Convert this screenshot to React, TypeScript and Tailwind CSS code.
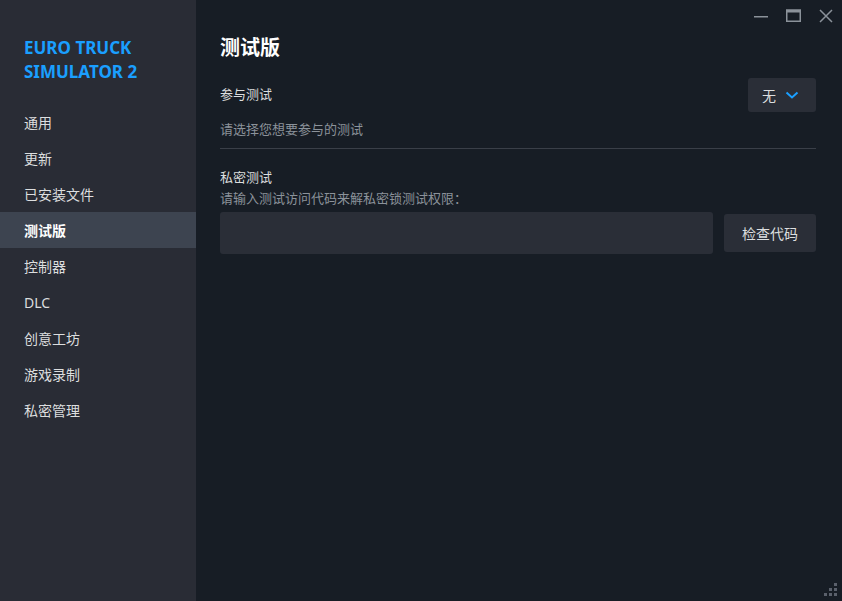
import React from "react";

const font = { fontFamily: '"Noto Sans", "Noto Sans CJK SC", sans-serif' };

const items = ["通用", "更新", "已安装文件", "测试版", "控制器", "DLC", "创意工坊", "游戏录制", "私密管理"];

export default function App() {
  return (
    <div className="flex w-[842px] h-[601px] bg-[#171d25] overflow-hidden" style={font}>
      <div className="w-[196px] shrink-0 bg-[#292c35] flex flex-col">
        <div className="px-6 pt-[36px] pb-[20px] text-[#1a9fff] font-bold text-[17px] leading-[24px]">
          EURO TRUCK
          <br />
          SIMULATOR 2
        </div>
        <div className="flex flex-col">
          {items.map((it) => (
            <div
              key={it}
              className={
                it === "测试版"
                  ? "h-[36px] flex items-center px-6 text-[14px] bg-[#3d4450] text-white font-bold"
                  : "h-[36px] flex items-center px-6 text-[14px] text-[#dcdedf]"
              }
            >
              {it}
            </div>
          ))}
        </div>
      </div>
      <div className="relative flex-1 flex flex-col pl-6 pr-[26px]">
        <div className="absolute top-[9px] right-[9px] flex items-center gap-[18px] text-[#8b929a]">
          <svg width="14" height="14" viewBox="0 0 14 14">
            <rect x="0" y="7" width="14" height="1.5" fill="#8b929a" />
          </svg>
          <svg width="15" height="14" viewBox="0 0 15 14">
            <rect x="0.75" y="1.25" width="13.5" height="11" fill="none" stroke="#8b929a" strokeWidth="1.5" />
            <rect x="0" y="0.5" width="15" height="3" fill="#8b929a" />
          </svg>
          <svg width="14" height="14" viewBox="0 0 14 14">
            <path d="M1 1 L13 13 M13 1 L1 13" stroke="#8b929a" strokeWidth="1.5" />
          </svg>
        </div>
        <div className="mt-[33px] text-white font-bold text-[20px] leading-[30px]">测试版</div>
        <div className="mt-[15px] flex items-center justify-between h-[34px]">
          <div className="text-[13px] text-[#dcdedf]">参与测试</div>
          <div className="w-[68px] h-[34px] rounded-[3px] bg-[#2a2e37] flex items-center pl-[14px] gap-[9px]">
            <span className="text-[14px] text-[#dcdedf]">无</span>
            <svg width="14" height="10" viewBox="0 0 14 10">
              <path d="M1.5 2.5 L7 7.5 L12.5 2.5" fill="none" stroke="#1a9fff" strokeWidth="2" />
            </svg>
          </div>
        </div>
        <div className="mt-[7px] text-[13px] text-[#8b929a] leading-[20px]">请选择您想要参与的测试</div>
        <div className="mt-[9px] h-px bg-[#3a3f48]" />
        <div className="mt-[18px] text-[13px] text-[#dcdedf] leading-[20px]">私密测试</div>
        <div className="mt-[1px] text-[13px] text-[#8b929a] leading-[20px]">请输入测试访问代码来解私密锁测试权限：</div>
        <div className="mt-[4px] flex items-center gap-[11px]">
          <div className="flex-1 h-[42px] rounded-[3px] bg-[#2a2e37]" />
          <div className="w-[92px] h-[38px] rounded-[3px] bg-[#2a2e37] flex items-center justify-center text-[14px] text-[#dcdedf]">
            检查代码
          </div>
        </div>
        <svg className="absolute right-[4px] bottom-[4px]" width="14" height="14" viewBox="0 0 14 14">
          <rect x="10" y="0" width="3" height="3" fill="#5a606b" />
          <rect x="5" y="5" width="3" height="3" fill="#5a606b" />
          <rect x="10" y="5" width="3" height="3" fill="#5a606b" />
          <rect x="0" y="10" width="3" height="3" fill="#5a606b" />
          <rect x="5" y="10" width="3" height="3" fill="#5a606b" />
          <rect x="10" y="10" width="3" height="3" fill="#5a606b" />
        </svg>
      </div>
    </div>
  );
}
